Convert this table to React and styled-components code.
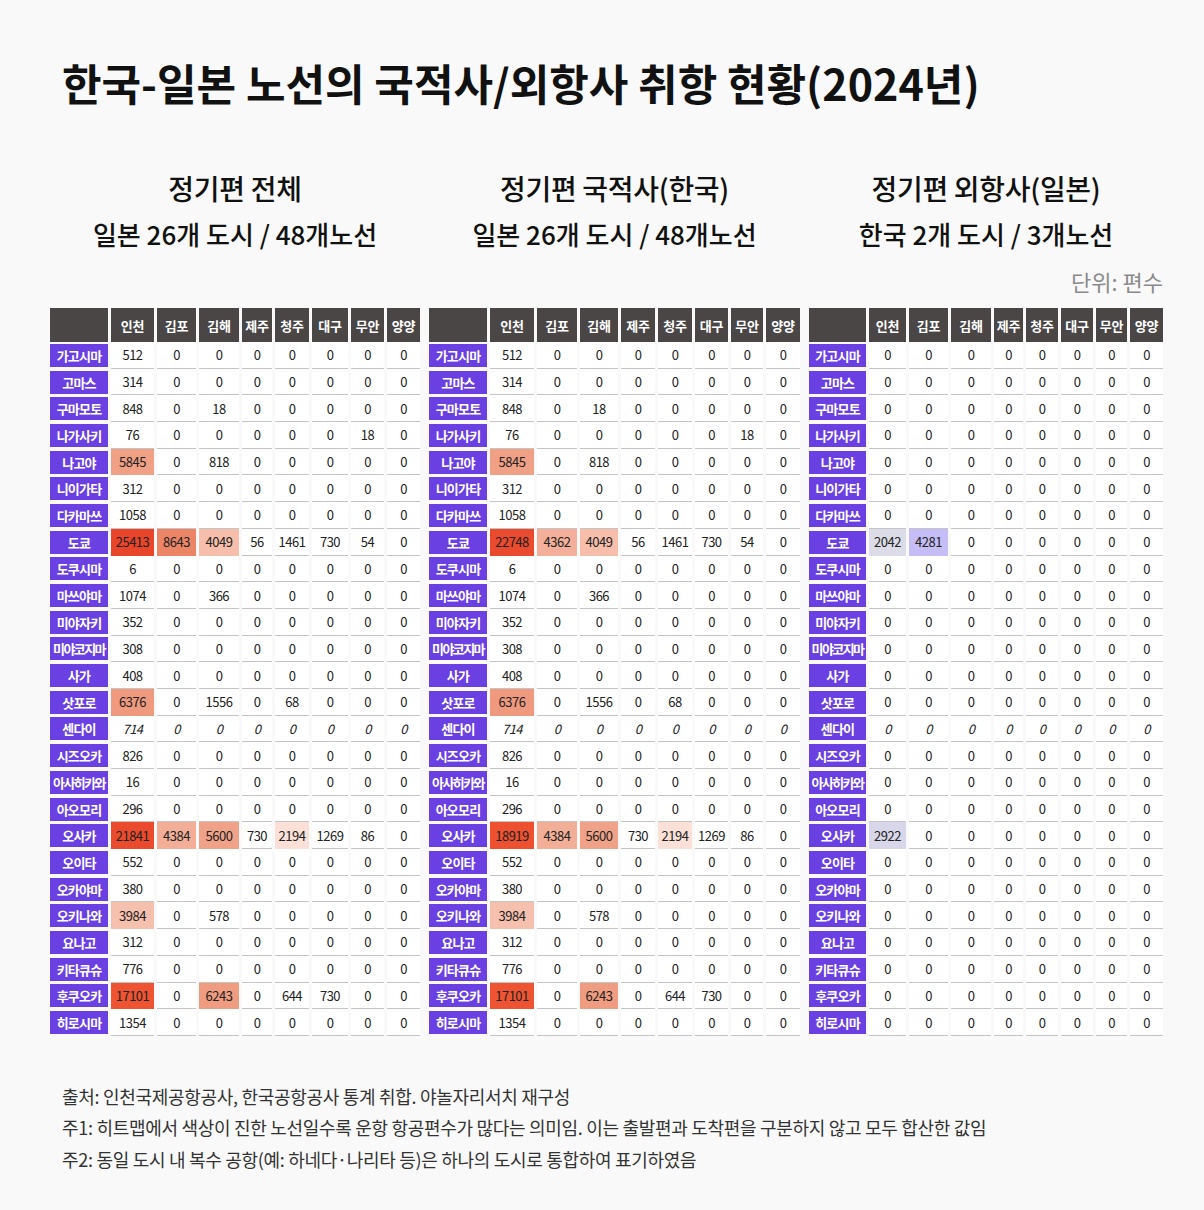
import styled, { createGlobalStyle } from "styled-components";

const GlobalStyle = createGlobalStyle`
  body {
    margin: 0;
    background: #f9f9f9;
  }
`;

const FONT = `"Noto Sans CJK KR", "Noto Sans", sans-serif`;

const Page = styled.div`
  width: 1204px;
  min-height: 1210px;
  box-sizing: border-box;
  padding: 58px 0 0 50px;
  background: #f9f9f9;
  font-family: ${FONT};
  color: #111;
`;

const Title = styled.h1`
  margin: 0;
  padding-left: 12px;
  font-size: 43px;
  line-height: 48px;
  font-weight: 700;
  letter-spacing: 0;
`;

const Columns = styled.div`
  display: flex;
  gap: 9px;
  margin-top: ${(p) => p.$top || 0}px;
`;

const HeadBlock = styled.div`
  width: ${(p) => p.$width}px;
  text-align: center;
`;

const Heading = styled.h2`
  margin: 0;
  font-size: 28px;
  line-height: 36px;
  font-weight: 500;
  letter-spacing: -0.3px;
`;

const SubHeading = styled.div`
  margin-top: 10px;
  font-size: 26px;
  line-height: 36px;
  font-weight: 500;
  letter-spacing: 0;
`;

const Unit = styled.div`
  width: 1113px;
  margin-top: 15px;
  text-align: right;
  font-size: 22px;
  line-height: 28px;
  color: #8a8a8a;
`;

const Table = styled.div`
  display: grid;
  grid-template-columns: ${(p) => p.$cols};
  grid-template-rows: 34px repeat(26, 26.7px);
  column-gap: 3px;
`;

const HeadCell = styled.div`
  background: #4a4646;
  color: #fff;
  font-size: 13px;
  font-weight: 700;
  letter-spacing: -0.3px;
  display: flex;
  align-items: center;
  justify-content: center;
`;

const CityCell = styled.div`
  align-self: center;
  height: 23px;
  background: #6b40e3;
  color: #fff;
  font-size: 13px;
  font-weight: 700;
  letter-spacing: ${(p) => (p.$tight ? "-1.6px" : "-0.8px")};
  white-space: nowrap;
  display: flex;
  align-items: center;
  justify-content: center;
`;

const ValueCell = styled.div`
  background: ${(p) => p.$bg || "#fff"};
  border-bottom: 1.5px solid ${(p) => (p.$bg ? p.$bg : "#c4c4c4")};
  font-size: 13px;
  letter-spacing: -0.5px;
  color: #222;
  font-style: ${(p) => (p.$italic ? "italic" : "normal")};
  display: flex;
  align-items: center;
  justify-content: center;
`;

const Notes = styled.div`
  margin-top: 45px;
  padding-left: 12px;
  font-size: 18px;
  line-height: 31.5px;
  letter-spacing: -0.3px;
  color: #333;
`;

const AIRPORTS = ["인천", "김포", "김해", "제주", "청주", "대구", "무안", "양양"];

const CITIES = [
  "가고시마", "고마스", "구마모토", "나가사키", "나고야", "니이가타", "다카마쓰",
  "도쿄", "도쿠시마", "마쓰야마", "미야자키", "미야코지마", "사가", "삿포로",
  "센다이", "시즈오카", "아사히카와", "아오모리", "오사카", "오이타", "오카야마",
  "오키나와", "요나고", "키타큐슈", "후쿠오카", "히로시마",
];

const BASE = {
  가고시마: [512], 고마스: [314], 구마모토: [848, 0, 18], 나가사키: [76, 0, 0, 0, 0, 0, 18],
  나고야: [5845, 0, 818], 니이가타: [312], 다카마쓰: [1058],
  도쿠시마: [6], 마쓰야마: [1074, 0, 366], 미야자키: [352], 미야코지마: [308], 사가: [408],
  삿포로: [6376, 0, 1556, 0, 68], 센다이: [714], 시즈오카: [826], 아사히카와: [16],
  아오모리: [296], 오이타: [552], 오카야마: [380], 오키나와: [3984, 0, 578],
  요나고: [312], 키타큐슈: [776], 후쿠오카: [17101, 0, 6243, 0, 644, 730], 히로시마: [1354],
};

const fill = (arr = []) => AIRPORTS.map((_, i) => arr[i] || 0);

const TOTAL = {
  ...BASE,
  도쿄: [25413, 8643, 4049, 56, 1461, 730, 54],
  오사카: [21841, 4384, 5600, 730, 2194, 1269, 86],
};

const KOREAN = {
  ...BASE,
  도쿄: [22748, 4362, 4049, 56, 1461, 730, 54],
  오사카: [18919, 4384, 5600, 730, 2194, 1269, 86],
};

const JAPANESE = {
  도쿄: [2042, 4281],
  오사카: [2922],
};

const RED = [
  [2000, [253, 236, 230]],
  [2200, [251, 224, 215]],
  [4000, [246, 192, 174]],
  [4400, [243, 173, 151]],
  [5800, [240, 160, 133]],
  [8600, [236, 133, 102]],
  [17000, [238, 84, 50]],
  [25500, [232, 69, 42]],
];

const PURPLE = [
  [2000, [220, 219, 232]],
  [2950, [216, 215, 234]],
  [4300, [197, 189, 246]],
];

function heat(v, stops) {
  if (v < stops[0][0]) return null;
  for (let i = 1; i < stops.length; i++) {
    const [v1, c1] = stops[i];
    const [v0, c0] = stops[i - 1];
    if (v <= v1) {
      const t = (v - v0) / (v1 - v0);
      const c = c0.map((x, k) => Math.round(x + (c1[k] - x) * t));
      return `rgb(${c.join(",")})`;
    }
  }
  const last = stops[stops.length - 1][1];
  return `rgb(${last.join(",")})`;
}

const SECTIONS = [
  {
    title: "정기편 전체",
    sub: "일본 26개 도시 / 48개노선",
    width: 370,
    cols: "58px 43px 39px 40px 30px 34px 36px 33px 33px",
    data: TOTAL,
    scale: RED,
  },
  {
    title: "정기편 국적사(한국)",
    sub: "일본 26개 도시 / 48개노선",
    width: 371,
    cols: "58px 44px 40px 38px 34px 34px 33px 32px 34px",
    data: KOREAN,
    scale: RED,
  },
  {
    title: "정기편 외항사(일본)",
    sub: "한국 2개 도시 / 3개노선",
    width: 354,
    cols: "57px 37px 39px 40px 29px 32px 32px 31px 33px",
    data: JAPANESE,
    scale: PURPLE,
  },
];

function RouteTable({ cols, data, scale }) {
  return (
    <Table $cols={cols}>
      <HeadCell />
      {AIRPORTS.map((a) => (
        <HeadCell key={a}>{a}</HeadCell>
      ))}
      {CITIES.map((city) => [
        <CityCell key={city} $tight={city.length >= 5}>
          {city}
        </CityCell>,
        ...fill(data[city]).map((v, i) => (
          <ValueCell
            key={city + i}
            $bg={heat(v, scale)}
            $italic={city === "센다이"}
          >
            {v}
          </ValueCell>
        )),
      ])}
    </Table>
  );
}

export default function App() {
  return (
    <Page>
      <GlobalStyle />
      <Title>한국-일본 노선의 국적사/외항사 취항 현황(2024년)</Title>
      <Columns $top={64}>
        {SECTIONS.map((s) => (
          <HeadBlock key={s.title} $width={s.width}>
            <Heading>{s.title}</Heading>
            <SubHeading>{s.sub}</SubHeading>
          </HeadBlock>
        ))}
      </Columns>
      <Unit>단위: 편수</Unit>
      <Columns $top={13}>
        {SECTIONS.map((s) => (
          <RouteTable key={s.title} cols={s.cols} data={s.data} scale={s.scale} />
        ))}
      </Columns>
      <Notes>
        <div>출처: 인천국제공항공사, 한국공항공사 통계 취합. 야놀자리서치 재구성</div>
        <div>
          주1: 히트맵에서 색상이 진한 노선일수록 운항 항공편수가 많다는 의미임. 이는
          출발편과 도착편을 구분하지 않고 모두 합산한 값임
        </div>
        <div>주2: 동일 도시 내 복수 공항(예: 하네다·나리타 등)은 하나의 도시로 통합하여 표기하였음</div>
      </Notes>
    </Page>
  );
}
